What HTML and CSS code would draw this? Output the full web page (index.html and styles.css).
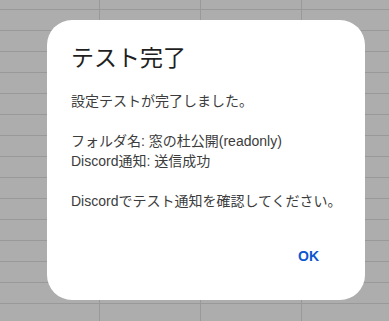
FILE: index.html
```html
<!DOCTYPE html>
<html lang="ja">
<head>
<meta charset="utf-8">
<title>テスト完了</title>
<link rel="stylesheet" href="styles.css">
</head>
<body>
<div class="dialog" role="dialog" aria-labelledby="dlg-title">
  <h1 class="dialog-title" id="dlg-title">テスト完了</h1>
  <div class="dialog-message">設定テストが完了しました。

フォルダ名: 窓の杜公開(readonly)
Discord通知: 送信成功

Discordでテスト通知を確認してください。</div>
  <div class="dialog-actions">
    <button class="btn-text" type="button">OK</button>
  </div>
</div>
</body>
</html>
```

FILE: styles.css
```css
html, body {
  margin: 0;
  padding: 0;
}

body {
  width: 389px;
  height: 321px;
  overflow: hidden;
  box-sizing: border-box;
  padding: 20px 0 0 47px;
  background-color: #adadad;
  background-image:
    linear-gradient(to bottom, #999999 1px, transparent 1px),
    linear-gradient(to right, #999999 1px, transparent 1px);
  background-size: 100% 21px, 101px 100%;
  background-position: 0 9px, 99px 0;
  font-family: "Liberation Sans", "Noto Sans CJK JP", sans-serif;
}

.dialog {
  width: 318px;
  height: 280px;
  box-sizing: border-box;
  background: #ffffff;
  border-radius: 25px;
  padding: 22px 22px 24px 24px;
  display: flex;
  flex-direction: column;
}

.dialog-title {
  margin: 0;
  font-size: 23px;
  line-height: 32px;
  font-weight: 400;
  color: #1f1f1f;
}

.dialog-message {
  margin-top: 17px;
  font-size: 14px;
  line-height: 20px;
  color: #3c3c3c;
  white-space: pre-line;
}

.dialog-actions {
  margin-top: auto;
  display: flex;
  justify-content: flex-end;
}

.btn-text {
  height: 40px;
  padding: 0 24px;
  border: none;
  background: none;
  font-family: "Liberation Sans", "Noto Sans CJK JP", sans-serif;
  font-size: 14px;
  font-weight: 700;
  color: #0b57d0;
  cursor: pointer;
}
```
